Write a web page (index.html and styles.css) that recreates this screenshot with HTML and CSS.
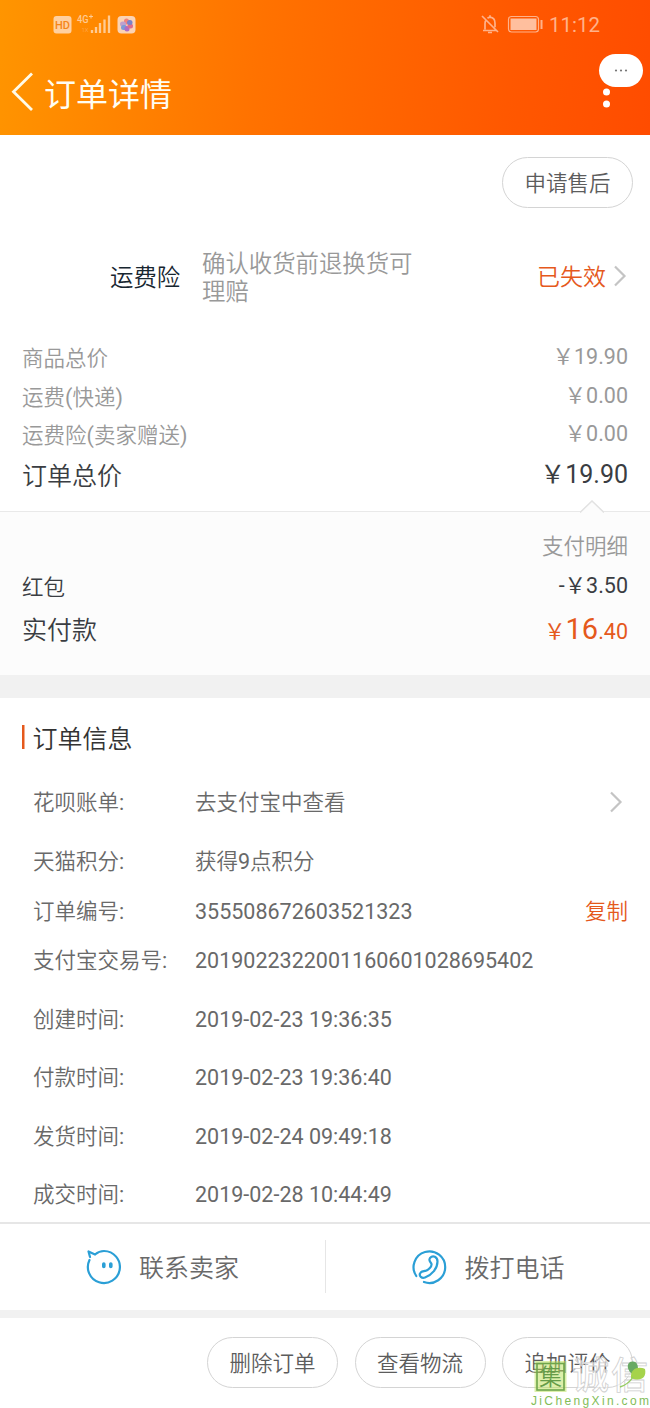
FILE: index.html
```html
<!DOCTYPE html>
<html lang="zh-CN">
<head>
<meta charset="utf-8">
<title>订单详情</title>
<link rel="stylesheet" href="styles.css">
</head>
<body>
<div class="screen">
  <header class="header">
    <div class="status">
      <svg class="status-left" width="90" height="24" viewBox="50 12 90 24">
        <rect x="53.5" y="16" width="18" height="17.500" rx="3" fill="#ffd0a0"/>
        <text x="62.500" y="29" text-anchor="middle" font-family="Roboto" font-weight="500" font-size="11.500" textLength="15" lengthAdjust="spacingAndGlyphs" fill="#f58518">HD</text>
        <text x="77" y="23" font-family="Roboto" font-weight="500" font-size="10" textLength="11.500" lengthAdjust="spacingAndGlyphs" fill="#ffcb94">4G</text>
        <path d="M89 16.500h4M91 14.500v4" stroke="#ffcb94" stroke-width="1"/>
        <text x="81.500" y="32" font-family="Roboto" font-size="6" fill="#ffb066">1X</text>
        <path d="M92 33v-3M96 33v-6M100 33v-10M104.500 33v-13.500M109 33v-17.500" stroke="#ffcb94" stroke-width="2.300"/>
        <rect x="117.500" y="16" width="18" height="17.500" rx="4" fill="#fbd3b4"/>
        <g stroke-width="5" stroke-linecap="round">
          <path d="M126.500 21v1" stroke="#f0837e"/><path d="M122.500 24h1" stroke="#c0a0cc"/>
          <path d="M123.500 27.500h1" stroke="#7c9bd8"/><path d="M127 28.500v.5" stroke="#b06cc4"/>
          <path d="M130 26h.5" stroke="#de6c8c"/><path d="M129.500 22.500h.5" stroke="#7a83c8"/>
        </g>
      </svg>
      <div class="status-right">
        <svg width="64" height="24" viewBox="480 12 64 24" fill="none" stroke="#ffb28a" stroke-width="1.700">
          <path d="M483 30.500h13M485 29.500v-6c0-1.500.4-2.600 1-3.500M487.500 18.200c.8-.6 1.600-.9 2.500-1v-2M490 17.200c3 .3 5 2.500 5 6v4M488 32.500h4M482 16l16 16"/>
          <rect x="508.500" y="16.500" width="30" height="15.500" rx="3" stroke-width="1.200"/>
          <rect x="510.500" y="18.500" width="26" height="11.500" fill="#ffbf9e" stroke="none"/>
          <path d="M541.500 20v9" stroke-width="2"/>
        </svg>
        <span class="clock">11:12</span>
      </div>
    </div>
    <div class="nav">
      <svg width="24" height="42" viewBox="0 0 24 42"><path d="M22 2.500L3.500 20.800 22 39" fill="none" stroke="#fffbe8" stroke-width="2.800"/></svg>
      <h1 class="title">订单详情</h1>
    </div>
    <svg class="menu" width="50" height="60" viewBox="596 50 50 60">
      <circle cx="606.500" cy="92" r="3.500" fill="#fff"/><circle cx="606.500" cy="104" r="3.500" fill="#fff"/>
      <rect x="599" y="54" width="44" height="33" rx="16.500" fill="#fff"/>
      <g fill="#777"><circle cx="616" cy="70.500" r="1.100"/><circle cx="621" cy="70.500" r="1.100"/><circle cx="626" cy="70.500" r="1.100"/></g>
    </svg>
  </header>

  <section class="after-sale"><button class="pill">申请售后</button></section>

  <section class="insurance">
    <span class="ins-label">运费险</span>
    <p class="ins-desc">确认收货前退换货可<br>理赔</p>
    <span class="ins-state">已失效</span>
    <svg class="chevron" width="14" height="22" viewBox="0 0 14 22"><path d="M2 1.500L11.500 11 2 20.500"/></svg>
  </section>

  <section class="totals">
    <div class="line"><span>商品总价</span><span class="price">&#xFFE5;19.90</span></div>
    <div class="line"><span>运费<i>(</i>快递<i>)</i></span><span class="price">&#xFFE5;0.00</span></div>
    <div class="line"><span>运费险<i>(</i>卖家赠送<i>)</i></span><span class="price">&#xFFE5;0.00</span></div>
    <div class="line line-total"><span>订单总价</span><span class="price">&#xFFE5;19.90</span></div>
  </section>

  <section class="payment">
    <svg class="notch" width="24" height="13" viewBox="0 0 24 13"><path d="M0 12.500L12 1l12 11.500" fill="#fcfcfc" stroke="#e2e2e2" stroke-width="1.500"/></svg>
    <div class="pay-detail">支付明细</div>
    <div class="line line-red"><span>红包</span><span class="price">-&#xFFE5;3.50</span></div>
    <div class="line line-paid"><span>实付款</span><span class="price">&#xFFE5;<b>16</b>.40</span></div>
  </section>

  <section class="info">
    <h2 class="info-title">订单信息</h2>
    <div class="row"><span class="key">花呗账单<i>:</i></span><span class="val">去支付宝中查看</span><svg class="chevron" width="14" height="22" viewBox="0 0 14 22"><path d="M2 1.500L11.500 11 2 20.500"/></svg></div>
    <div class="row"><span class="key">天猫积分<i>:</i></span><span class="val">获得<i>9</i>点积分</span></div>
    <div class="row row-short"><span class="key">订单编号<i>:</i></span><span class="val num">355508672603521323</span><span class="copy">复制</span></div>
    <div class="row"><span class="key">支付宝交易号<i>:</i></span><span class="val num">2019022322001160601028695402</span></div>
    <div class="row"><span class="key">创建时间<i>:</i></span><span class="val num">2019-02-23 19:36:35</span></div>
    <div class="row"><span class="key">付款时间<i>:</i></span><span class="val num">2019-02-23 19:36:40</span></div>
    <div class="row"><span class="key">发货时间<i>:</i></span><span class="val num">2019-02-24 09:49:18</span></div>
    <div class="row"><span class="key">成交时间<i>:</i></span><span class="val num">2019-02-28 10:44:49</span></div>
  </section>

  <section class="contact">
    <div class="contact-item">
      <svg width="36" height="36" viewBox="0 0 36 36" fill="none" stroke="#2b9fd6" stroke-width="2.200" stroke-linecap="round" stroke-linejoin="round">
        <path d="M10 5.500C13 3 16 2 19 2A16 16 0 1 1 4.500 11M10 5.500L3.500 2.500l1.500 5.500"/>
        <path d="M18.800 15v2.500M25.800 15v2.500" stroke-width="3.600"/>
      </svg>
      <span>联系卖家</span>
    </div>
    <div class="contact-item">
      <svg width="36" height="36" viewBox="0 0 36 36" fill="none" stroke="#2b9fd6" stroke-width="2.200" stroke-linecap="round" stroke-linejoin="round">
        <path d="M5.300 27A15.800 15.800 0 1 1 13 33"/>
        <path d="M19 9c3-3.500 7.500-1 7.500 3.500 0 7-5.500 13.500-12.500 16-3.500 1.200-6-1.500-5-4 .8-2.500 3.500-2.500 5.500-2.700 2.500-.3 6.500-4 6-6.800C20 13 17 12 19 9z"/>
      </svg>
      <span>拨打电话</span>
    </div>
  </section>

  <footer class="footer">
    <button class="pill">删除订单</button>
    <button class="pill">查看物流</button>
    <button class="pill">追加评价</button>
  </footer>

  <svg class="watermark" width="122" height="52" viewBox="528 1356 122 52">
    <rect x="534.500" y="1361" width="32" height="31" fill="#b9df55" fill-opacity=".5"/>
    <rect x="537" y="1363.500" width="27" height="26.500" fill="none" stroke="#6fa64b" stroke-width="1.600"/>
    <text x="550.500" y="1385" text-anchor="middle" font-size="23" font-weight="350" fill="#659c48">集</text>
    <g font-size="37" font-weight="500" fill="#fff" fill-opacity=".6" stroke="#cfcfcf" stroke-width=".8">
      <text x="572" y="1389">诚</text><text x="611" y="1389">信</text>
    </g>
    <path d="M634 1375C626 1371 626 1362 632 1361.500c6-.5 7 6 5 11z" fill="#68a963"/>
    <path d="M631 1378c-1-10 8-12 14-9 2 9-5 13-14 9z" fill="#a5d34b"/>
    <path d="M633 1377c-3 5-7 8-13 10" fill="none" stroke="#94cc60" stroke-width="1.400"/>
    <text class="wm-url" x="531" y="1405" font-size="12" textLength="118" fill="#82bd58">JiChengXin.com</text>
  </svg>
</div>
</body>
</html>
```
FILE: styles.css
```css
* { box-sizing: border-box; }
body { margin: 0; background: #fff; }
.screen {
  position: relative;
  width: 650px;
  height: 1408px;
  overflow: hidden;
  font-family: Roboto, "Noto Sans CJK SC", sans-serif;
  font-size: 21.5px;
  line-height: 28px;
  color: #696969;
  font-weight: 350;
}
svg { display: block; flex: none; }
i { font-style: normal; font-weight: 400; }
.header {
  position: relative;
  height: 135px;
  background: linear-gradient(97deg, #ff9500 0%, #ff7200 40%, #ff5800 78%, #ff4c00 100%);
}
.status {
  height: 48px;
  padding: 12px 50px 0;
  display: flex;
  justify-content: space-between;
}
.status-right { display: flex; gap: 5px; }
.clock { font-size: 20.5px; line-height: 26px; font-weight: 400; color: #ffb28a; }
.nav { display: flex; align-items: center; gap: 10px; padding-left: 10px; height: 88px; }
.title { margin: 5px 0 0; font-size: 32px; font-weight: 400; color: #fffdf2; line-height: 44px; }
.menu { position: absolute; left: 596px; top: 50px; }

.after-sale { height: 108px; padding: 22px 17px 0; display: flex; justify-content: flex-end; }
.pill {
  width: 131px;
  height: 51px;
  padding: 2px 0 0;
  border: 1px solid #d4d4d4;
  border-radius: 26px;
  background: #fff;
  color: #5c5c5c;
  font: inherit;
}
.insurance {
  height: 70px;
  padding: 0 23px 0 110px;
  display: flex;
  align-items: center;
  font-size: 23.4px;
}
.ins-label { width: 92px; color: #172630; }
.ins-desc { margin: 0; flex: 1; color: #999; }
.ins-state { color: #e5591c; font-size: 23px; margin-right: 7px; }
.insurance .chevron { margin-bottom: 4px; }
.chevron path { fill: none; stroke: #c4c4c4; stroke-width: 2.2; }

.totals { height: 198px; padding: 27px 22px 0; color: #999; }
.line { display: flex; justify-content: space-between; height: 38.5px; line-height: 38.5px; }
.line .price { font-weight: 400; transform: translateY(-2px); }
.line-total { font-size: 25px; height: 42px; line-height: 42px; color: #3a3d42; }
.payment {
  position: relative;
  height: 164px;
  padding: 21px 22px 0;
  background: #fcfcfc;
  border-top: 1px solid #e9e9e9;
  color: #3a3d42;
}
.notch { position: absolute; left: 580px; top: -12px; }
.pay-detail { text-align: right; color: #999; }
.line-red { margin-top: 8px; }
.line-paid { font-size: 25px; height: 46px; line-height: 46px; }
.line-paid .price { font-size: 21.5px; color: #e5591c; }
.line-paid b { font-size: 29px; font-weight: 400; }

.info { height: 547px; border-top: 23px solid #f1f1f1; padding: 23px 22px 0; }
.info-title {
  margin: 0;
  height: 53px;
  padding-left: 10.5px;
  line-height: 37px;
  font-size: 25px;
  font-weight: 350;
  color: #333;
  background: linear-gradient(#e5591c, #e5591c) 0 4px / 2.5px 24px no-repeat;
}
.row { display: flex; align-items: center; height: 58.4px; padding-left: 11px; }
.row .chevron { margin: 0 5px 3px 0; }
.row-short { height: 41.5px; }
.key { width: 162px; }
.val { flex: 1; }
.num { font-weight: 400; }
.copy { color: #e5591c; }

.contact {
  height: 96px;
  border-top: 2px solid #e6e6e6;
  border-bottom: 8px solid #f1f1f1;
  display: flex;
  background: #fff;
}
.contact-item {
  width: 50%;
  height: 86px;
  display: flex;
  align-items: center;
  padding-left: 85px;
  gap: 18px;
  font-size: 25px;
  background: linear-gradient(#e6e6e6, #e6e6e6) 100% 16px / 1px 53px no-repeat;
}
.contact-item span { padding-top: 3px; }
.contact-item:first-child { width: 326px; }
.contact-item:last-child { background: none; }
.footer { height: 90px; padding: 19px 17px 0; display: flex; justify-content: flex-end; gap: 16.5px; }
.watermark { position: absolute; left: 528px; top: 1356px; font-weight: 400; }
.wm-url { font-family: "Liberation Sans", sans-serif; }
```
